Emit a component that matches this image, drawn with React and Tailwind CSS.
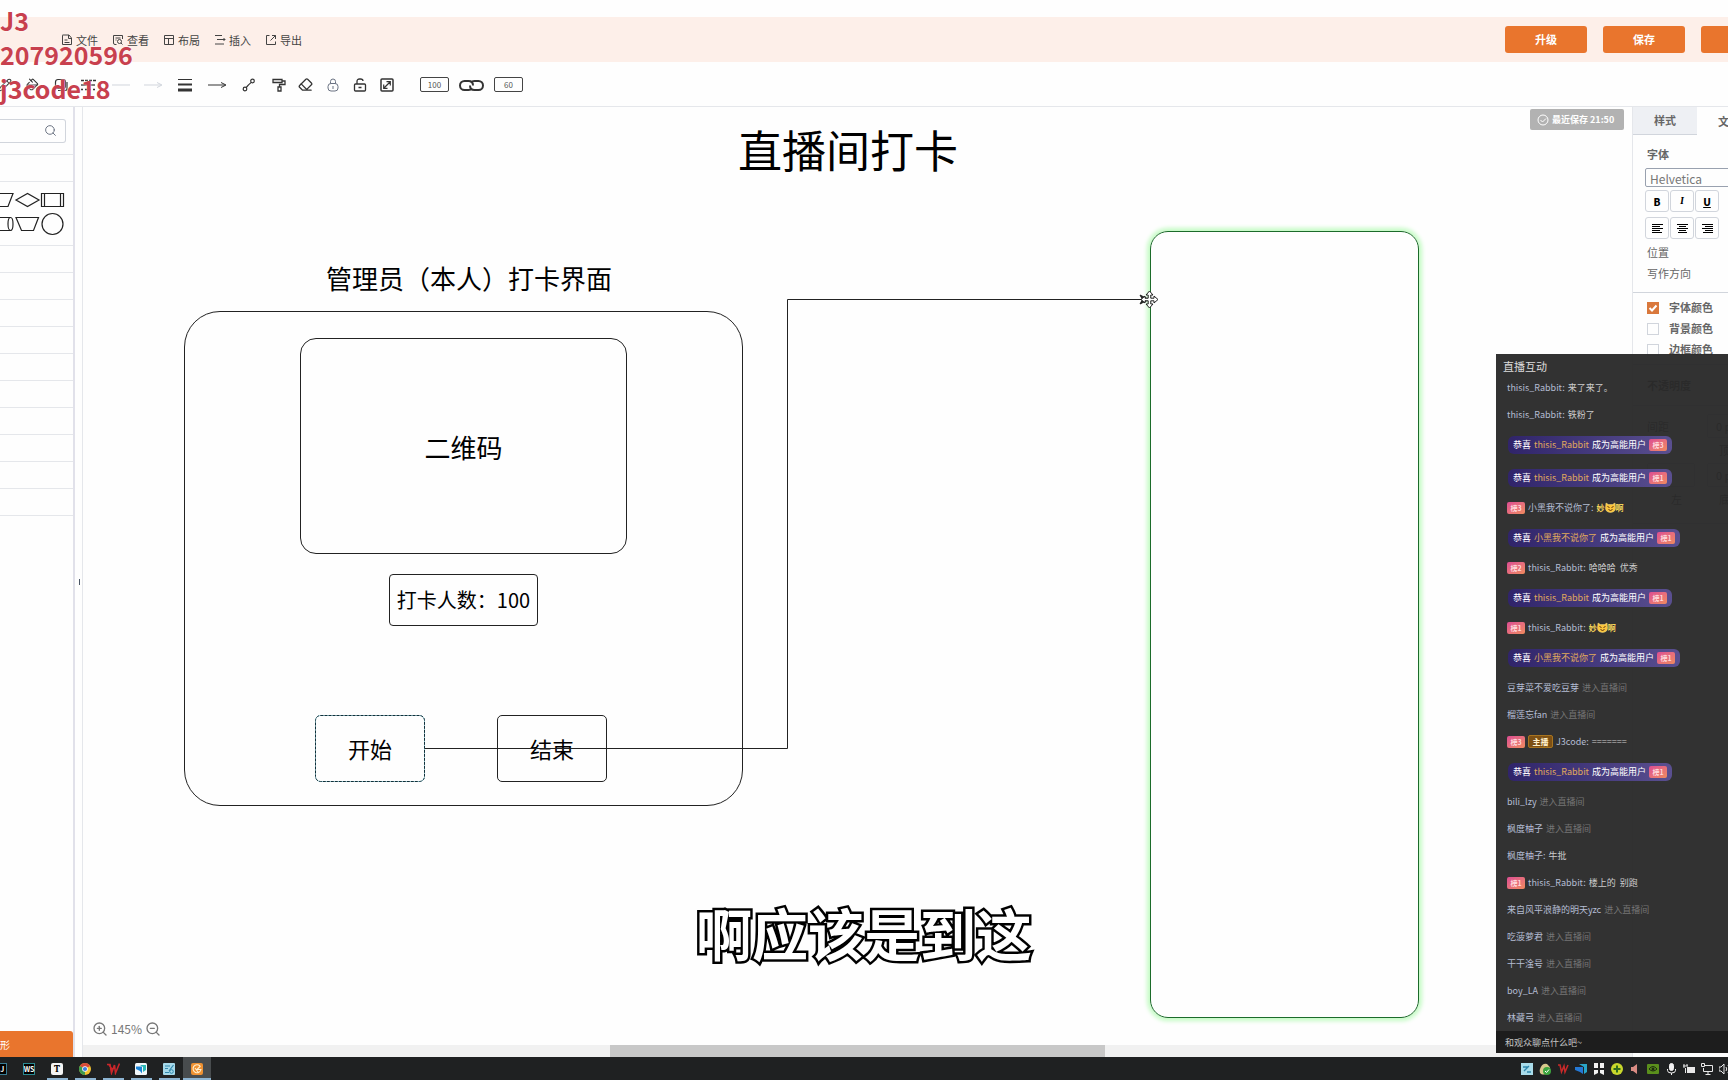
import React from 'react';
import { Search, ZoomIn, ZoomOut, Eraser, Pencil, PaintBucket } from 'lucide-react';

const Svg = ({ w = 14, h = 14, sw = 1, className = '', children }) => (
  <svg
    width={w}
    height={h}
    viewBox={`0 0 ${w} ${h}`}
    fill="none"
    stroke="currentColor"
    strokeWidth={sw}
    className={`shrink-0 ${className}`}
    aria-hidden="true"
  >
    {children}
  </svg>
);

const menuItems = [
  {
    label: '文件',
    icon: <path d="M1.5 1.5v9h9V4L8 1H1.5zM7.5 1v3.5h3M3.5 6h3M3.5 8.5h5" />,
  },
  {
    label: '查看',
    icon: <path d="M10.5 5V1.5h-9V9q0 1.5 1.5 1.5h1.5M3.5 4h5M3.5 6h1M7.5 9.5a2 2 0 1 0 0-4 2 2 0 0 0 0 4M9 9l1.5 1.5" />,
  },
  {
    label: '布局',
    icon: <path d="M1.5 1.5h9v9h-9zM1.5 4.5h9M5.5 4.5v6" />,
  },
  {
    label: '插入',
    icon: <path d="M1 1.5h7M3 5.5h8M1 10h9M9.5 4l1.5 1.5L9.5 7" />,
  },
  {
    label: '导出',
    icon: <path d="M4.5 1.5h-3v9h9v-3M7 1.5h3.5V5M10.5 1.5l-5 5" />,
  },
];

const styleTools = [
  { label: '线条颜色', icon: <Pencil size={14} strokeWidth={1.8} /> },
  { label: '填充', icon: <PaintBucket size={14} strokeWidth={1.8} /> },
  {
    label: '阴影',
    icon: (
      <Svg sw={1.2}>
        <rect x="1.5" y="1.5" width="10" height="9" rx="2.5" />
        <path d="M4 12.5h7q2 0 2-2V4" />
      </Svg>
    ),
  },
  {
    label: '线型',
    icon: (
      <Svg w={16} sw={1.3}>
        <path d="M0 2.5h16" strokeDasharray="3 1" />
        <path d="M0 7h14" />
        <path d="M0 11.5h16" strokeDasharray="2 2" />
      </Svg>
    ),
  },
];

const arrow = <path d="M0 7h17M13 4.5l5 2.5-5 2.5" />;

const lineTools = [
  { label: '撤销', icon: <Svg w={18} className="text-gray-300"><path d="M0 7h18" /></Svg> },
  { label: '起点', icon: <Svg w={18} className="text-gray-300">{arrow}</Svg> },
  {
    label: '线宽',
    icon: (
      <Svg>
        <path d="M0 1.5h14" />
        <path d="M0 6.5h14" strokeWidth="2" />
        <path d="M0 12h14" strokeWidth="3" />
      </Svg>
    ),
  },
  { label: '终点', icon: <Svg w={18}>{arrow}</Svg> },
  {
    label: '连线',
    icon: (
      <Svg sw={1.2}>
        <circle cx="3" cy="11" r="1.8" />
        <circle cx="10.5" cy="3" r="1.8" />
        <path d="M4.2 9.6C6 7 6 7 9.3 4.4" />
      </Svg>
    ),
  },
];

const editTools = [
  {
    label: '格式刷',
    icon: (
      <Svg sw={1.3}>
        <path d="M1 1.5h9v3H1zM10 3h3v3.5H7.5V9M6 9h3v4H6z" />
      </Svg>
    ),
  },
  { label: '清除', icon: <Eraser size={15} strokeWidth={2} /> },
  {
    label: '锁定',
    icon: (
      <Svg className="text-gray-500">
        <rect x="2" y="5.5" width="10" height="7.5" rx="3" />
        <path d="M4.5 5.5V3.5a2.5 2.5 0 0 1 5 0v2M7 8v3" />
      </Svg>
    ),
  },
  {
    label: '解锁',
    icon: (
      <Svg sw={1.3}>
        <rect x="1.5" y="6" width="11" height="7" rx="1" />
        <path d="M4 6V3.5Q4 1 6.5 1h1Q10 1 10 3M5.5 9.5h3" />
      </Svg>
    ),
  },
  {
    label: '全屏',
    icon: (
      <Svg sw={1.5}>
        <rect x="1" y="1" width="12" height="12" rx="1" />
        <path d="M4 10l6-6M6.5 3.7h3.8v3.8M3.7 6.5v3.8h3.8" strokeWidth="1.2" />
      </Svg>
    ),
  },
];

const ToolGroup = ({ tools, item, className = '' }) => (
  <div className={`flex shrink-0 ${className}`}>
    {tools.map((t) => (
      <button key={t.label} aria-label={t.label} className={`flex h-6 items-center justify-center ${item}`}>
        {t.icon}
      </button>
    ))}
  </div>
);

const Header = () => (
  <header className="flex h-[45px] shrink-0 items-center justify-between overflow-hidden bg-[#fdefe9]">
    <nav className="flex gap-3.5 pl-[61px]">
      {menuItems.map((m) => (
        <button key={m.label} className="flex items-center gap-[3px] text-[11px] leading-4 text-[#444]">
          <Svg w={12} h={12}>{m.icon}</Svg>
          {m.label}
        </button>
      ))}
    </nav>
    {/* The last button runs off the right edge */}
    <div className="-mr-[55px] flex gap-4 text-[11px] font-bold text-white">
      <button className="h-[27px] w-[82px] rounded-[3px] bg-[#e9752d]">升级</button>
      <button className="h-[27px] w-[82px] rounded-[3px] bg-[#e9752d]">保存</button>
      <button aria-label="分享" className="h-[27px] w-[82px] rounded-[3px] bg-[#e9752d]" />
    </div>
  </header>
);

const Toolbar = () => (
  <div className="flex h-[45px] shrink-0 items-center overflow-hidden border-b border-gray-200 pt-px text-[#333]">
    <ToolGroup tools={styleTools} item="w-7" className="-ml-[9px]" />
    <ToolGroup tools={lineTools} item="w-8" className="ml-0.5" />
    <ToolGroup tools={editTools} item="w-[27px]" />
    <div className="ml-5 flex items-center gap-[10px]">
      <input aria-label="宽" defaultValue="100" className="h-[15px] w-[29px] rounded-[2px] border border-[#444] text-center text-[8px] text-[#555]" />
      <Svg w={25} h={12} sw={2}>
        <path d="M13 9.5Q12 11 9.5 11h-4a4.5 4.5 0 0 1 0-9h4Q14 2 14 6.5" />
        <path d="M12 3.5Q13 2 15.5 2h4a4.5 4.5 0 0 1 0 9h-4Q11 11 11 6.5" />
      </Svg>
      <input aria-label="高" defaultValue="60" className="h-[15px] w-[29px] rounded-[2px] border border-[#444] text-center text-[8px] text-[#555]" />
    </div>
  </div>
);

const shapeRows = Array.from({ length: 10 }, (_, i) => i);

const Sidebar = () => (
  <aside className="flex w-[75px] shrink-0 flex-col overflow-hidden border-r-2 border-[#e1e1ea]">
    <div className="flex h-12 shrink-0 items-center border-b border-gray-200">
      <label className="flex h-6 w-[66px] items-center rounded-r-[3px] border border-l-0 border-gray-300 pr-2">
        <input aria-label="搜索" className="w-full min-w-0 flex-1 outline-none" />
        <Search size={13} strokeWidth={1.8} className="shrink-0 text-gray-500" />
      </label>
    </div>
    <div className="h-[27px] shrink-0 border-b border-gray-200" />
    <div className="h-16 shrink-0 border-b border-gray-200">
      <svg width="73" height="63" fill="none" stroke="#222" strokeWidth="1.2" aria-hidden="true">
        <path d="M-8 11.5H13L8 24.5H-14" />
        <path d="M16 18L27.5 11.5 39 18 27.5 24.5z" />
        <path d="M41.5 11.5h22v13h-22zM44.5 11.5v13M60.5 11.5v13" />
        <path d="M0 35.5h10.5M0 48.5h10.5" />
        <ellipse cx="10.5" cy="42" rx="2.5" ry="6.5" />
        <path d="M16 35.5h22.5l-5 13h-12z" />
        <circle cx="52.5" cy="42" r="10.5" />
      </svg>
    </div>
    {shapeRows.map((i) => (
      <div key={i} className="h-[27px] shrink-0 border-b border-gray-200" />
    ))}
    <button className="mt-auto h-[26px] shrink-0 rounded-tr-[3px] bg-[#e9752d] text-left text-[10px] text-white">形</button>
  </aside>
);

const nodeText = 'absolute -translate-x-1/2 whitespace-nowrap text-black';
const nodeBox = 'absolute flex items-center justify-center whitespace-nowrap text-black';

const Canvas = () => (
  <main className="relative flex min-w-0 flex-1 flex-col overflow-hidden border-l border-gray-200">
    <div className="relative min-h-0 flex-1 overflow-hidden">
      <h1 className={`${nodeText} left-[765px] top-[12px] text-[44px] leading-[60px]`}>直播间打卡</h1>
      <h2 className={`${nodeText} left-[386px] top-[153px] text-[26px] leading-[36px]`}>管理员（本人）打卡界面</h2>
      <div className={`${nodeBox} left-[101px] top-[204px] h-[495px] w-[559px] rounded-[36px] border border-[#222]`} />
      <div className={`${nodeBox} left-[217px] top-[231px] h-[216px] w-[327px] rounded-[16px] border border-[#222] text-[26px]`}>二维码</div>
      <div className={`${nodeBox} left-[306px] top-[467px] h-[52px] w-[149px] rounded-[4px] border border-[#222] text-[20px]`}>打卡人数：100</div>
      <div className={`${nodeBox} left-[232px] top-[608px] h-[67px] w-[110px] rounded-[5px] text-[22px]`}>开始</div>
      <div className={`${nodeBox} left-[414px] top-[608px] h-[67px] w-[110px] rounded-[5px] border border-[#222] text-[22px]`}>结束</div>
      <div className="absolute left-[1067px] top-[124px] h-[787px] w-[269px] rounded-[18px] border border-[#1c6b2a] shadow-[0_0_4px_3px_#c4fbc4]" />
      {/* Connector from the start node, with the move cursor on its end */}
      <svg className="absolute left-0 top-0" width="1090" height="690" fill="none" stroke="#222" aria-hidden="true">
        <rect x="232.5" y="608.5" width="109" height="66" rx="5" stroke="#a9dbe4" />
        <rect x="232.5" y="608.5" width="109" height="66" rx="5" stroke="#12303a" strokeDasharray="3 1" />
        <path d="M342 641.5H704.5V192.5H1060" />
        <path d="M1057 188l9 4.5-9 4.5 2.5-4.5z" fill="#222" />
        <path
          d="M1066.5 184l3.5 4h-2.2v3.2h3.2V189l4 3.5-4 3.5v-2.2h-3.2v3.2h2.2l-3.5 4-3.5-4h2.2v-3.2H1062v2.2l-4-3.5 4-3.5v2.2h3.2V188H1063z"
          fill="#fff"
        />
      </svg>
      <div className="absolute right-2 top-[2px] flex h-[21px] w-[94px] items-center gap-[3px] whitespace-nowrap rounded-[2px] bg-[#b2b2b2] pl-[7px] text-[9px] font-bold text-white">
        <Svg w={12} h={12}>
          <circle cx="6" cy="6" r="5" />
          <path d="M3.5 6l2 2 3.5-3.5" />
        </Svg>
        最近保存 21:50
      </div>
      <div className="absolute bottom-1.5 left-[9px] flex items-center gap-[3px] text-[12px] leading-5 text-[#777]">
        <button aria-label="放大"><ZoomIn size={16} strokeWidth={2} /></button>
        145%
        <button aria-label="缩小"><ZoomOut size={16} strokeWidth={2} /></button>
      </div>
    </div>
    <div className="h-3 shrink-0 bg-[#f1f1f1]">
      <div className="mx-[34%] h-full bg-[#c8c8c8]" />
    </div>
  </main>
);

const fontStyles = [
  { label: '加粗', glyph: 'B', cls: 'font-black' },
  { label: '斜体', glyph: 'I', cls: 'font-bold italic font-serif' },
  { label: '下划线', glyph: 'U', cls: 'font-black underline' },
  { label: '字号', glyph: '', cls: '' },
];

const alignStyles = [
  { label: '左对齐', d: 'M0 .5h11M0 2.5h8M0 4.5h11M0 6.5h8M0 8.5h10' },
  { label: '居中', d: 'M0 .5h11M2 2.5h7M0 4.5h11M2 6.5h7M1 8.5h9' },
  { label: '右对齐', d: 'M0 .5h11M3 2.5h8M0 4.5h11M3 6.5h8M1 8.5h10' },
  { label: '两端对齐', d: '' },
];

const squareBtn = 'flex h-[22px] w-6 items-center justify-center rounded-[3px] border border-gray-300 text-[10px] text-black last:ml-2';

const Check = ({ label, checked }) => (
  <label className="flex h-[21px] items-center gap-[10px] font-bold text-[#666]">
    <input
      type="checkbox"
      defaultChecked={checked}
      className="peer h-3 w-3 appearance-none border border-gray-300 checked:border-[#d9783c] checked:bg-[#d9783c]"
    />
    {/* Tick drawn over the box */}
    <Svg w={12} h={12} sw={2} className="-ml-[22px] hidden text-white peer-checked:block">
      <path d="M2.5 6L5 8.5 9.5 3.5" />
    </Svg>
    {label}
  </label>
);

const StylePanel = () => (
  <aside className="w-24 shrink-0 overflow-hidden border-l border-gray-200 text-[11px] text-[#666]">
    <div className="w-48">
      <div className="flex h-7">
        <button className="w-16 border-b border-gray-300 bg-[#eef0f4] font-bold">样式</button>
        <button className="w-16 font-bold">文本</button>
        <button className="w-16 font-bold">排列</button>
      </div>
      <div className="flex h-[158px] flex-col border-b border-gray-300 pl-3 pt-[9px]">
        <div className="mb-1.5 ml-0.5 h-[18px] font-bold leading-5">字体</div>
        <select aria-label="字体" className="mb-[3px] h-[19px] w-40 appearance-none rounded-[2px] border border-gray-400 pl-1 pt-0.5 text-[12px] leading-4 text-[#777]">
          <option>Helvetica</option>
        </select>
        <div className="mb-[5px] flex gap-px">
          {fontStyles.map((f) => (
            <button key={f.label} aria-label={f.label} className={squareBtn}>
              <span className={f.cls}>{f.glyph}</span>
            </button>
          ))}
        </div>
        <div className="mb-[3px] flex gap-px">
          {alignStyles.map((a) => (
            <button key={a.label} aria-label={a.label} className={squareBtn}>
              <Svg w={11} h={9}><path d={a.d} /></Svg>
            </button>
          ))}
        </div>
        <div className="ml-0.5 h-[21px] leading-5">位置</div>
        <div className="ml-0.5 h-[21px] leading-5">写作方向</div>
      </div>
      <div className="h-[72px] border-b border-gray-300 pl-[14px] pt-1">
        <Check label="字体颜色" checked />
        <Check label="背景颜色" />
        <Check label="边框颜色" />
      </div>
      <div className="flex h-[41px] items-center border-b border-gray-300 pl-[14px] font-bold">不透明度</div>
      <div className="grid grid-cols-[60px_60px_60px] gap-y-1 border-b border-gray-300 pb-4 pl-[14px] pt-2">
        <span className="leading-6">间距</span>
        <input aria-label="顶" defaultValue="0 px" className="h-6 w-12 rounded-[2px] border border-gray-300 pl-2" />
        <span />
        <span />
        <span className="pl-3">顶</span>
        <span />
        <input aria-label="左" className="h-6 w-12 rounded-[2px] border border-gray-300 pl-2" />
        <input aria-label="底" defaultValue="0 px" className="h-6 w-12 rounded-[2px] border border-gray-300 pl-2" />
        <span />
        <span className="pl-6">左</span>
        <span className="pl-3">底</span>
      </div>
    </div>
  </aside>
);

const RABBIT = 'thisis_Rabbit';
const HEI = '小黑我不说你了';

const chat = [
  { type: 'msg', name: RABBIT, text: '来了来了。' },
  { type: 'msg', name: RABBIT, text: '铁粉了' },
  { type: 'honor', name: RABBIT, rank: 3 },
  { type: 'honor', name: RABBIT, rank: 1 },
  { type: 'msg', name: HEI, rank: 3, emote: true },
  { type: 'honor', name: HEI, rank: 1 },
  { type: 'msg', name: RABBIT, rank: 2, text: '哈哈哈  优秀' },
  { type: 'honor', name: RABBIT, rank: 1 },
  { type: 'msg', name: RABBIT, rank: 1, emote: true },
  { type: 'honor', name: HEI, rank: 1 },
  { type: 'enter', name: '豆芽菜不爱吃豆芽' },
  { type: 'enter', name: '榴莲忘fan' },
  { type: 'msg', name: 'J3code', rank: 3, host: true, text: '=======' },
  { type: 'honor', name: RABBIT, rank: 1 },
  { type: 'enter', name: 'bili_lzy' },
  { type: 'enter', name: '枫度柚子' },
  { type: 'msg', name: '枫度柚子', text: '牛批' },
  { type: 'msg', name: RABBIT, rank: 1, text: '楼上的  别跑' },
  { type: 'enter', name: '来自风平浪静的明天yzc' },
  { type: 'enter', name: '吃菠萝君' },
  { type: 'enter', name: '干干淦号' },
  { type: 'enter', name: 'boy_LA' },
  { type: 'enter', name: '林藏弓' },
];

const Rank = ({ n }) => (
  <span className="flex h-3 w-[18px] items-center justify-center rounded-[2px] bg-linear-to-br from-[#dd4c92] to-[#f08a5c] text-[7px] font-bold text-[#ffd9dc]">
    榜{n}
  </span>
);

const Emote = () => (
  <span className="flex items-center text-[8px] font-bold text-[#f6d55a]">
    妙
    <Svg w={11} h={11}>
      <path d="M1 1l2.5 1.5h4L10 1l.5 5q0 4-5 4.500Q.5 10 .5 6z" fill="#fbc53c" stroke="#f7e08a" strokeWidth=".5" />
      <path d="M2.5 4.5l2 1M8.500 4.5l-2 1M3.500 7.5q2 2 4 0" stroke="#5a3210" />
    </Svg>
    啊
  </span>
);

const ChatRow = ({ row }) => {
  if (row.type === 'honor') {
    return (
      <li className="flex h-[33px] items-center">
        <span className="ml-px flex h-[18px] items-center gap-[3px] rounded-[6px] bg-linear-to-r from-[#30246a] to-[#5a4f90] px-[5px] text-white">
          <span>恭喜</span>
          <span className="text-[#e0a95c]">{row.name}</span>
          <span>成为高能用户</span>
          <Rank n={row.rank} />
        </span>
      </li>
    );
  }
  return (
    <li className="flex h-[27px] items-center gap-[3px] text-[#b4bdd2]">
      {row.rank && <Rank n={row.rank} />}
      {row.host && (
        <span className="flex h-[13px] w-[25px] items-center justify-center rounded-[2px] border border-[#a8741f] bg-[#7d5014] text-[8px] font-bold text-[#fff0cc]">
          主播
        </span>
      )}
      <span>{row.type === 'enter' ? row.name : `${row.name}:`}</span>
      {row.type === 'enter' && <span className="text-[#757575]">进入直播间</span>}
      {row.text && <span className="whitespace-pre text-[#ccc]">{row.text}</span>}
      {row.emote && <Emote />}
    </li>
  );
};

const LiveChat = () => (
  <section className="absolute bottom-[27px] right-0 w-[232px] bg-[#272727]/95 text-[9px] leading-3">
    <h2 className="h-5 pl-[7px] pt-1 text-[11px] leading-4 text-[#ddd]">直播互动</h2>
    <ul className="whitespace-nowrap pl-[11px]">
      {chat.map((row, i) => (
        <ChatRow key={i} row={row} />
      ))}
    </ul>
    <input
      aria-label="弹幕"
      placeholder="和观众聊点什么吧~"
      className="block h-[22px] w-full bg-[#1d1d1d] pl-[9px] text-[9px] outline-none placeholder:text-[#c4c4c4]"
    />
  </section>
);

const tile = 'flex h-3 w-3 items-center justify-center text-[7px] font-bold leading-none';

const apps = [
  { name: 'IntelliJ', icon: <span className={`${tile} border border-[#3a7d94] bg-black text-white`}>IJ</span> },
  { name: 'WebStorm', icon: <span className={`${tile} border border-[#2a8a92] bg-black text-white`}>WS</span> },
  { name: 'Typora', open: true, icon: <span className={`${tile} rounded-[2px] bg-[#f4f4f4] font-serif text-[10px] text-black`}>T</span> },
  {
    name: 'Chrome',
    open: true,
    icon: (
      <Svg w={12} h={12}>
        <g stroke="none">
          <circle cx="6" cy="6" r="6" fill="#f2c230" />
          <path d="M6 6L.8 3A6 6 0 0 1 11.2 3z" fill="#d94a3a" />
          <path d="M6 6L.8 3A6 6 0 0 0 6 12z" fill="#3c9a50" />
          <circle cx="6" cy="6" r="2.8" fill="#fff" />
          <circle cx="6" cy="6" r="2.1" fill="#3f7de0" />
        </g>
      </Svg>
    ),
  },
  {
    name: 'WPS',
    open: true,
    icon: (
      <Svg w={13} h={12} sw={1.6} className="text-[#c9262a]">
        <path d="M0 1.5h3L4.5 10l3-8 1 8 4-9.5M2 1.5l3 5" />
      </Svg>
    ),
  },
  {
    name: '网盘',
    open: true,
    icon: (
      <Svg w={12} h={12}>
        <rect width="12" height="12" rx="1.5" fill="#f2f8fb" stroke="none" />
        <path d="M1 3.5h6v7L5 8 1 6z" fill="#1c84d8" stroke="none" />
        <path d="M5 2h6v5L8 9V4z" fill="#2bb8b4" stroke="none" />
      </Svg>
    ),
  },
  {
    name: '记事本',
    open: true,
    icon: (
      <Svg w={12} h={12}>
        <rect width="12" height="12" rx="1" fill="#a6d9ea" stroke="none" />
        <path d="M2 3h5M2 5.5h3M2 9.5h4M10.5 2L6 8" stroke="#2f87ac" strokeWidth="1.2" />
        <circle cx="8.5" cy="8.5" r="1.8" stroke="#2f87ac" />
      </Svg>
    ),
  },
  {
    name: '画图',
    open: true,
    active: true,
    icon: (
      <Svg w={12} h={12}>
        <rect width="12" height="12" rx="2" fill="#ee9132" stroke="none" />
        <path d="M9 3A4 4 0 1 0 10 6.5H6L9.5 3M4 5l3 4" stroke="#fff0cf" strokeWidth="1.1" />
      </Svg>
    ),
  },
];

const trayIcons = [
  <g stroke="none"><rect width="12" height="12" fill="#a9dcea" /><path d="M2 4h5M3 8l5-5M6 9h4" stroke="#2f87ac" strokeWidth="1.3" /></g>,
  <g stroke="none"><path d="M1 6Q3 0 8 1q4 3 3 7-4 5-9 3-2-2-1-5" fill="#d8c98c" /><circle cx="8" cy="8" r="4" fill="#3da53e" /><path d="M6 8l1.5 1.5 2.5-3" stroke="#fff" /></g>,
  <path d="M1 2h2l1.5 7L7 3l1 6 3-7" stroke="#c92a2a" strokeWidth="1.5" />,
  <g stroke="none"><path d="M4 1h8v8l-3 2V4z" fill="#29a6c9" /><path d="M0 4h8v7L5 9 0 7z" fill="#2479d6" /></g>,
  <g stroke="none" fill="#f2f2f2"><path d="M1 0h4v5H1zM7 0h4v5H7zM1 7h4v3l-4 2zM7 7h4v5l-4-2z" /></g>,
  <g stroke="none"><circle cx="6" cy="6" r="6" fill="#c8d72c" /><path d="M6 2.5v7M2.5 6h7" stroke="#2e6b1c" strokeWidth="2" /></g>,
  <path d="M2 4h2l4-3v10L4 8H2z" fill="#d98c84" stroke="none" />,
  <g stroke="none"><rect y="1" width="12" height="10" rx="1" fill="#5a8f1c" /><path d="M2 6q4-5 8 0-4 4-8 0" stroke="#1e2b10" /><circle cx="6" cy="6" r="1.5" fill="#1e2b10" /></g>,
  <g stroke="#f2f2f2"><rect x="4.5" y=".5" width="4" height="7" rx="2" fill="#f2f2f2" /><path d="M2.5 6v1.5q0 2.5 4 2.5t4-2.5V6M6.500 10v2" /></g>,
  <g stroke="#e8e8e8"><path d="M1 1v4M4 1v2M0 3h5M2.5 5v5" /><rect x="4.5" y="4.5" width="7" height="5" fill="#e8e8e8" /></g>,
  <g stroke="#e8e8e8"><path d="M4 2.5h7.5v6h-9V5M7 8.5V11M4.5 11.5h5M.5.5h3v3h-3z" /></g>,
  <path d="M0 4h2l3-3v10L2 8H0zM7 4q1.500 2 0 4M9 2q3 4 0 8" stroke="#e8e8e8" />,
];

const Taskbar = () => (
  <footer className="flex h-[23px] shrink-0 items-stretch justify-between overflow-hidden bg-[#1f2122]">
    <div className="-ml-[13px] flex">
      {apps.map((a) => (
        <button
          key={a.name}
          aria-label={a.name}
          className={`flex w-7 flex-col items-center justify-between pt-[6px] ${a.active ? 'bg-[#484c4e]' : ''}`}
        >
          {a.icon}
          <span className={`h-[2px] ${a.active ? 'w-7' : 'w-[21px]'} ${a.open ? 'bg-[#8db4d2]' : ''}`} />
        </button>
      ))}
    </div>
    <div className="-mr-[6px] flex items-center">
      {trayIcons.map((icon, i) => (
        <span key={i} className="flex w-[18px] justify-center">
          <Svg w={12} h={12}>{icon}</Svg>
        </span>
      ))}
    </div>
  </footer>
);

export default function App() {
  return (
    <div className="relative flex h-screen flex-col overflow-hidden bg-[#fefefe] font-['Noto_Sans_CJK_SC',sans-serif]">
      <div className="h-[17px] shrink-0" />
      <Header />
      <Toolbar />
      <div className="flex min-h-0 flex-1">
        <Sidebar />
        <div className="flex w-[7px] shrink-0 items-center justify-end">
          <span className="mr-0.5 h-1.5 w-px bg-gray-600" />
        </div>
        <Canvas />
        <StylePanel />
      </div>
      <Taskbar />
      <LiveChat />
      <p className="pointer-events-none absolute inset-x-0 bottom-[108px] text-center text-[56px] font-bold leading-[80px] text-white [-webkit-text-stroke:5px_black] [paint-order:stroke_fill]">
        啊应该是到这
      </p>
      <div className="pointer-events-none absolute left-0 top-[3px] text-[25px] font-bold leading-[34px] text-[#c8404e] [text-shadow:0_0_2px_#fff]">
        <p>J3</p>
        <p>207920596</p>
        <p>j3code18</p>
      </div>
    </div>
  );
}
